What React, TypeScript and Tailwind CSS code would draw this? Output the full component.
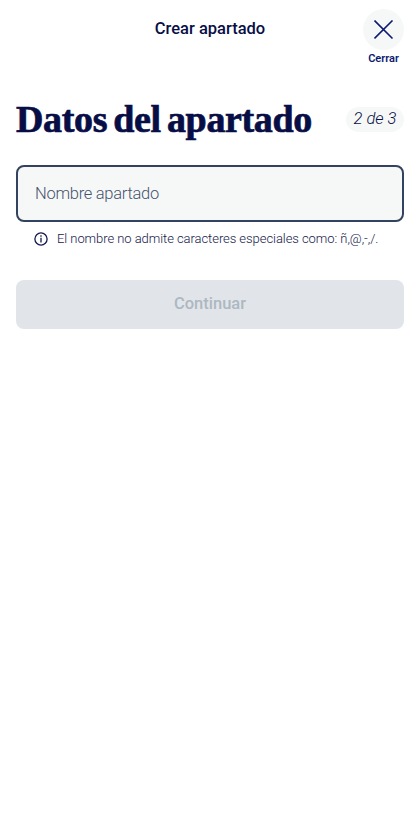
import React, { useState } from 'react';

function CloseIcon() {
  return (
    <svg className="w-[20px] h-[20px]" viewBox="0 0 20 20" fill="none" stroke="#0b1a72" strokeWidth="1.6">
      <path d="M0.5 0.5L18.5 18.5M18.5 0.5L0.5 18.5" />
    </svg>
  );
}

function InfoIcon() {
  return (
    <svg className="w-[14px] h-[14px] shrink-0" viewBox="0 0 14 14" fill="none" stroke="#14184a" strokeWidth="1.3">
      <circle cx="7" cy="7" r="6.1" />
      <path d="M7 5.8V10.6" />
      <path d="M7 3.2V4.7" />
    </svg>
  );
}

export default function App() {
  const [name, setName] = useState('');

  return (
    <div className="min-h-screen bg-white font-['Roboto',sans-serif] text-[#070e46]">
      {/* Header */}
      <header className="grid grid-cols-[1fr_auto_1fr] items-start px-4 pt-[9px]">
        <span />
        <span className="text-[16.5px] leading-[40px] font-medium whitespace-nowrap">Crear apartado</span>
        <button type="button" className="justify-self-end flex flex-col items-center w-[41px]">
          <span className="flex items-center justify-center w-[41px] h-[41px] rounded-full bg-[#f6f8f8]">
            <CloseIcon />
          </span>
          <span className="pt-px text-[11px] leading-[16px] font-semibold text-[#0b1a72]">Cerrar</span>
        </button>
      </header>

      <main className="px-4 pt-[30px]">
        {/* Title and step */}
        <div className="flex items-center justify-between h-[44px]">
          <h1 className="font-['Liberation_Serif',serif] font-bold text-[38px] leading-[44px] tracking-[-0.35px] [word-spacing:-3px] [-webkit-text-stroke:0.7px_#070e46] whitespace-nowrap">
            Datos del apartado
          </h1>
          <span className="flex items-center justify-center w-[58px] h-[25px] rounded-full bg-[#f6f8f8] text-[16.5px] italic font-light whitespace-nowrap">
            2 de 3
          </span>
        </div>

        {/* Name field */}
        <label className="mt-[24px] flex items-center h-[57px] px-[17px] rounded-lg border-2 border-[#33435f] bg-[#f6f8f8]">
          {!name && (
            <span className="pt-[2px] text-[16.5px] tracking-[-0.28px] font-light text-[#46536d] whitespace-nowrap">
              Nombre apartado
            </span>
          )}
          <input
            className="flex-1 min-w-0 bg-transparent outline-none text-[16.5px]"
            value={name}
            onChange={(e) => setName(e.target.value)}
          />
        </label>
        <div className="mt-[7px] ml-[18px] flex items-center gap-[9px] h-[20px]">
          <InfoIcon />
          <p className="text-[13px] tracking-[-0.06px] font-light whitespace-nowrap text-[#14184a]">
            El nombre no admite caracteres especiales como: ñ,@,-,/.
          </p>
        </div>

        <button
          type="button"
          disabled={!name}
          className="mt-[31px] w-full h-[48.5px] rounded-lg bg-[#e1e5e9] text-[16.5px] font-medium text-[#adb8c2]"
        >
          Continuar
        </button>
      </main>
    </div>
  );
}
